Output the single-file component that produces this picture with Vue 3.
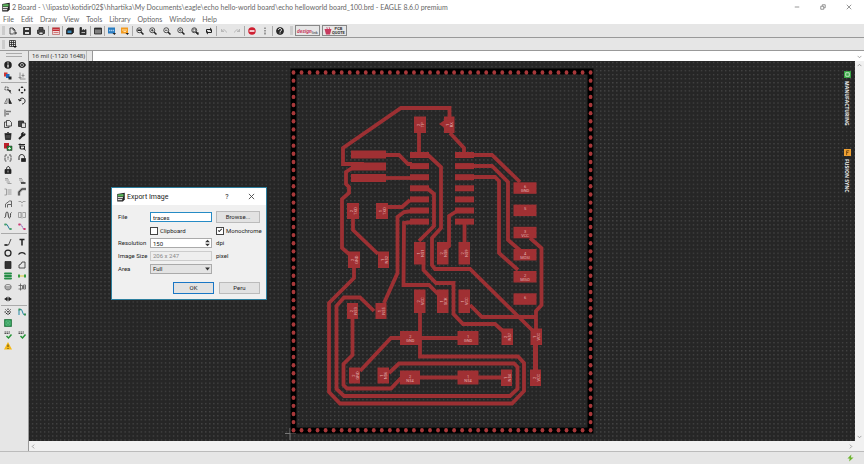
<script setup>
import { ref } from 'vue'

const menus = ['File', 'Edit', 'Draw', 'View', 'Tools', 'Library', 'Options', 'Window', 'Help']

const file = ref('traces')
const clipboard = ref(false)
const monochrome = ref(true)
const resolution = ref('150')
const size = ref('206 x 247')
const area = ref('Full')
const command = ref('')

// icon bodies, all on a 16x16 grid
const lens = '<circle cx="6.500" cy="6.500" r="5"/><path d="M10 10l5 5" stroke-width="3"/>'
const icons = {
  open: '<path d="M9 14H2V2h6l4 4v3M8 2v4h4"/><path d="M9 12h5M12 9l3 3-3 3" stroke-width="2"/>',
  save: '<path d="M1 1h14v14H1z" fill="#333"/><path d="M4 2h8v4H4zM4 10h8v4H4z" fill="#ddd" stroke="none"/>',
  print: '<path d="M4 6V1h8v5M4 13H1V6h14v7h-3" fill="#555"/><path d="M4 10h8v5H4z" fill="#ddd"/>',
  cam: '<path d="M1 1h14v14H1z" fill="#f0dada" stroke="#b66"/><path d="M1 2h14v6H1z" fill="#c22d35" stroke="none"/><path d="M3 5h2M7 5h2M11 5h2" stroke="#fff"/><path d="M3 11h10" stroke="#c55"/>',
  board: '<path d="M4 2h11v9l-3 3H1V6z" fill="#222"/><path d="M3 7h8v5H3z" fill="#3786b8" stroke="none"/>',
  factory: '<path d="M2 15V1h3v7l4-3v3l5-3v10z" fill="#333"/><path d="M5 11h7" stroke="#ddd"/>',
  library: '<path d="M1 2h14v12H1z" fill="#333"/><path d="M4 5v8M8 5v8M12 5v8" stroke="#ccc" stroke-width="2"/>',
  script: '<path d="M0 1h14v12H0z" fill="#287bc1" stroke="none"/><path d="M2 7h10" stroke="#a9cdec" stroke-dasharray="3 1" stroke-width="3"/><path d="M9 12h7l-3 4z" fill="#222" stroke="none"/>',
  ulp: '<path d="M0 1h14v12H0z" fill="#f29b20" stroke="none"/><path d="M2 6h10M5 9h5" stroke="#ffe0a8" stroke-width="2"/><path d="M9 12h7l-3 4z" fill="#222" stroke="none"/>',
  fit: lens + '<path d="M3 6.500h7" stroke-width="3"/>',
  zoomin: lens + '<path d="M4 6.500h5M6.500 4v5"/>',
  zoomout: lens + '<path d="M4 6.500h5"/>',
  redraw: lens + '<circle cx="6.500" cy="6.500" r="1.500"/>',
  select: lens + '<path d="M4 4h5v5H4z" stroke-width="1"/><path d="M9 11h7l-3 4z" fill="#222" stroke="none"/>',
  refresh: '<path d="M3 10V5h8M13 6v5H5" stroke-width="2"/><path d="M10 1l4 4-4 3zM6 8l-4 3 4 4z" fill="#222" stroke="none"/>',
  undo: '<path d="M3 9c3-5 8-4 10 2M3 4v5h5" stroke="#aaa"/>',
  redo: '<path d="M13 9c-3-5-8-4-10 2M13 4v5H8" stroke="#aaa"/>',
  stop: '<circle cx="8" cy="8" r="7.500" fill="#cf1f31" stroke="none"/><path d="M3 8h10" stroke="#fff" stroke-width="3"/>',
  go: '<path d="M8 1v3M8 6v3M8 11v4" stroke="#999" stroke-width="4"/>',
  help: '<circle cx="8" cy="8" r="7" fill="#2b2b2b"/><path d="M5 6c0-4 6-4 6 0 0 2-3 2-3 4M8 11v2" stroke="#fff" stroke-width="2"/>',
  grid: '<path d="M1 1h12v12H1zM5 1v12M9 1v12M1 5h12M1 9h12"/><path d="M8 12h8l-4 4z" fill="#111" stroke="none"/>',
  info: '<circle cx="8" cy="8" r="7.500" fill="#222" stroke="none"/><path d="M8 3v2M8 7v6" stroke="#fff" stroke-width="2.500"/>',
  eye: '<path d="M0 8c4-8 12-8 16 0-4 8-12 8-16 0z" fill="#222" stroke="none"/><circle cx="8" cy="8" r="3" fill="#222" stroke="#ddd"/>',
  layers: '<path d="M0 1h7v8H0z" fill="#c33" stroke="none"/><path d="M4 4h7v8H4z" fill="#2368bb" stroke="none"/><path d="M9 9h6v6H9z" fill="#222" stroke="none"/>',
  mark: '<path d="M4 1v13h11M1 11h6M10 3v8M7 7h6" stroke="#777"/>',
  group: '<path d="M2 2h6v6H2z" stroke-dasharray="2 1"/><path d="M7 7l7 3-3 1 3 4" fill="#222"/>',
  move: '<path d="M8 0l3 4H5zM8 16l3-4H5zM0 8l4-3v6zM16 8l-4-3v6z" fill="#222" stroke="none"/>',
  mirror: '<path d="M6 3v10H1z" stroke="#666"/><path d="M10 3v10h5z" fill="#222"/>',
  rotate: '<path d="M3 7c1-7 12-6 11 2-1 4-4 5-6 5M1 4l2 4 4-2" stroke-width="2"/>',
  align: '<path d="M2 1v14"/><path d="M4 5h10M4 10h6" stroke="#777" stroke-width="3"/>',
  copy: '<path d="M5 1h6l4 4v7H5zM5 4H1v11h9v-3"/>',
  paste: '<path d="M1 2h10v11H1z" fill="#444"/><path d="M7 6h8v9H7z" fill="#ddd"/>',
  trash: '<path d="M2 4h12l-1 11H3zM1 3h14M6 1h4" fill="#222"/><path d="M6 6v7M10 6v7" stroke="#bbb" stroke-width="1"/>',
  wrench: '<path d="M2 14l8-8" stroke-width="4"/><path d="M14 3c-3 3-5 1-3-2-5-1-6 7-1 7 4 0 5-3 4-5z" fill="#222"/>',
  add: '<path d="M0 0h10v11H0z" fill="#bd2029" stroke="none"/><path d="M6 6h10v9H6z" fill="#2a8e3e" stroke="#222" stroke-width="1"/><path d="M8 11h6M11 8v5" stroke="#fff"/>',
  replace: '<path d="M1 3h13M4 1v10M5 6h8v6H5zM11 10l4 5" stroke-width="2"/>',
  pinswap: '<path d="M6 2H2v12h4M10 2h4v12h-4M8 5v6" stroke-dasharray="4 1"/>',
  gateswap: '<path d="M2 12V7c0-8 11-8 11 0v2" stroke-width="2"/><path d="M7 9h8v6H7z" fill="#222"/>',
  lock: '<path d="M2 7h12v8H2z" fill="#222"/><path d="M5 7c0-8 7-8 7 0" stroke-width="2"/><path d="M8 9v4" stroke="#ddd"/>',
  name: '<path d="M2 3h6M2 6h8M5 10h7M7 13h8" stroke="#888"/>',
  value: '<path d="M2 3h6M2 6h8M4 10h8" stroke="#888"/><path d="M6 12h9" stroke-width="3"/>',
  smash: '<path d="M1 2h4v12H1M7 4h8M7 8h8M7 12h8" stroke="#888"/>',
  miter: '<path d="M2 15V8l6-6h8" stroke="#888" stroke-width="5"/><path d="M2 15V8l6-6h8"/>',
  split: '<path d="M3 15V8l8-6h4v12M7 15V9h8" stroke="#666" stroke-width="2"/>',
  optimize: '<path d="M1 3h5l2 3 2-3h5M8 9v4" stroke="#888"/>',
  meander: '<path d="M1 13C5 14 2 2 6 2s1 12 5 12 0-11 4-11" stroke="#444" stroke-width="2"/>',
  ripup: '<path d="M1 3h5v10H1zM10 3h5v10h-5M8 2v13" stroke="#888"/>',
  route: '<path d="M1 3h5l5 9h4" stroke="#227b9e" stroke-width="2"/><path d="M1 1h4v4H1zM11 10h4v4h-4z" fill="#4aa467" stroke="none"/>',
  ripline: '<path d="M1 3h5l5 9h4" stroke="#63a" stroke-dasharray="3 1"/><path d="M1 1h4v4H1zM11 10h4v4h-4z" fill="#d1356c" stroke="none"/>',
  line: '<path d="M1 14h8l5-12" stroke-width="1.500"/><path d="M1 14h6" stroke-width="3"/>',
  text: '<path d="M3 3h10M8 3v12" stroke-width="3"/>',
  circle: '<circle cx="8" cy="8" r="6" stroke-width="2.500"/>',
  arc: '<path d="M1 11c3-5 11-5 14 0" stroke-width="2.500"/>',
  rect: '<path d="M2 1h12v14H2z" fill="#333"/>',
  poly: '<path d="M2 14V8l4-2 2-4h6v12z"/>',
  via: '<path d="M2 3h12M2 8h12M2 13h12" stroke="#248d46" stroke-width="4" stroke-linecap="round"/>',
  signal: '<path d="M3 8h10" stroke="#dfc92e" stroke-width="2"/><path d="M0 5h4v6H0zM12 5h4v6h-4z" fill="#3a9c43" stroke="none"/>',
  hole: '<ellipse cx="8" cy="6" rx="6" ry="3" stroke="#666"/><path d="M2 6v4c1 5 11 5 12 0V6" stroke="#666" fill="#aaa"/>',
  attribute: '<path d="M1 5h8v7H1M5 1v14M9 8h6M11 4h4v8h-4z" stroke="#555"/>',
  dimension: '<path d="M1 8h14"/><path d="M1 8l6-5v10zM15 8L9 3v10z" fill="#222" stroke="none"/>',
  ratsnest: '<path d="M3 3l10 10M13 3L3 13M8 1v5M1 8h4M11 8h4M8 11v4" stroke-dasharray="3 2" stroke-width="2"/>',
  auto: '<path d="M2 14V3h5l4 10h4" stroke="#2588a5" stroke-width="2"/><path d="M1 1h4v4H1zM12 11h4v4h-4z" fill="#358f54" stroke="none"/>',
  pcb: '<path d="M1 1h14v14H1z" fill="#2a9a55" stroke="#24713e"/><path d="M4 4h8v8H4zM8 6v4M6 8h4" stroke="#8fd3a4" stroke-width="1"/>',
  erc: '<path d="M1 2h12M1 5h10" stroke="#555" stroke-width="2" stroke-dasharray="3 1"/><path d="M5 10l4 4 6-7" stroke="#259437" stroke-width="3"/>',
  warn: '<path d="M8 0l8 15H0z" fill="#f6b914" stroke="none"/><path d="M8 5v5M8 12v2" stroke="#222"/>'
}

const toolbar = [
  'open', 'save', 'print', '|cam', '|board', 'factory', '|library', '|script', 'ulp',
  '|fit', 'zoomin', 'zoomout', 'redraw', 'select', 'refresh', '|undo', 'redo', '|stop', 'go', '|help'
]

const palette = [
  { name: 'a', tools: ['info', 'eye', 'layers', 'mark'] },
  {
    name: 'b',
    tools: [
      'group', 'move', 'mirror', 'rotate', 'align', '', 'copy', 'paste', 'trash', 'wrench',
      'add', 'replace', 'pinswap', 'gateswap', 'lock', '', 'name', 'value', 'smash', 'miter',
      'split', 'optimize', 'meander', 'ripup', 'route', 'ripline'
    ]
  },
  {
    name: 'c',
    tools: ['line', 'text', 'circle', 'arc', 'rect', 'poly', 'via', 'signal', 'hole', 'attribute', 'dimension', '']
  },
  { name: 'd', tools: ['ratsnest', 'auto', 'pcb', '', 'erc', 'erc', 'warn', ''] }
]

// perforated board edge
const edge = []
for (let i = 0; i <= 37; i++) {
  const x = 293.5 + i * 8.03
  edge.push([x, 72.5], [x, 430.2])
}
for (let i = 1; i < 44; i++) {
  const y = 72.5 + i * 8.13
  edge.push([293.5, y], [590.6, y])
}

const traces = [
  '449.500,118 449.500,108 401,108 343,148 343,164 364,164',
  '385,155 399,155 408,164 412,164',
  '385,178 411,178',
  '352,168 346,172 346,184 349,187 349,193 342,199 342,248 349,254',
  '419,133 419,152',
  '450,133 464,148 464,152',
  '428,155 441,167 441,228 432,238 432,265 435,269 470,269 532,330',
  '416,189 428,189 434,194 434,226 419,241',
  '473,155 492,155 520,182',
  '473,166 492,166 508,182 508,240 522,252',
  '473,177 495,177 499,181 499,253 518,270',
  '530,238 541.500,248 541.500,305 536,311 536,330',
  '470,305 482,317 536,317',
  '387,207 402,207 410,200',
  '353,219 353,230 378,254',
  '354,268 354,278 329,303 329,392 340,403.500 512,403.500 524,391 524,363 518,356.500 420,356.500 420,310',
  '374,311 360,297.500 344,297.500 336.500,306 336.500,389 344,396 510,396 517.500,389 517.500,367 514,363.500 399,363.500 389,373',
  '352.500,319 352.500,355 343.500,364 343.500,385 347,388.500 391,388.500 401,378',
  '360,371 391,338 458,338',
  '420,377.500 502,377.500',
  '423.500,264 423.500,270 436,283 453.500,283 453.500,314 463,324 495,324 505,333',
  '412,211 404,212 397.500,217 397.500,273 384,303',
  '412,222 404,223 403.500,285 429,285 440,296',
  '457,211 449,216 449,246 445,249',
  '464.500,224 464.500,242'
]

const pads = [
  [351, 150.5, 35, 8], [351, 162.5, 35, 8], [351, 174, 35, 8]
]
for (let i = 0; i < 7; i++) {
  pads.push([410, 152 + i * 11.1, 19, 6], [455, 152 + i * 11.1, 19, 6])
}

// pads with a printed label; v marks the vertical ones
const labelled = [
  { r: [414, 116.5, 12, 16.5], t: ['2', 'TP'], v: true },
  { r: [444, 116.5, 10.5, 16.5], t: ['1', 'RX'], v: true },
  { r: [347, 203, 12, 16], t: ['2', 'TXD'], v: true },
  { r: [376, 203, 12, 16], t: ['1', 'TXD'], v: true },
  { r: [348, 251.5, 12, 16.5], t: ['2', 'GND'], v: true },
  { r: [378, 251.5, 11, 16.5], t: ['1', 'N$2'], v: true },
  { r: [347, 303, 11, 16], t: ['2', 'N$3'], v: true },
  { r: [375.5, 303, 11, 16], t: ['1', 'N$5'], v: true },
  { r: [349, 367.5, 11, 16], t: ['2', 'GND'], v: true },
  { r: [377.5, 367.5, 11.5, 16], t: ['1', 'N$6'], v: true },
  { r: [414, 242, 11.5, 22.5], t: ['1', 'N$1'], v: true },
  { r: [437, 242, 11.5, 22.5], t: ['2', 'N$8'], v: true },
  { r: [458.5, 242, 11.5, 22.5], t: ['2', 'N$9'], v: true },
  { r: [414, 289.5, 11.5, 23.5], t: ['2', 'VCC'], v: true },
  { r: [437, 289.5, 11.5, 23.5], t: ['1', 'SCK'], v: true },
  { r: [458.5, 289.5, 11.5, 23.5], t: ['1', 'VCC'], v: true },
  { r: [501.5, 328.5, 11.5, 16.5], t: ['2', 'N$7'], v: true },
  { r: [530.5, 328.5, 11.5, 16.5], t: ['1', 'VCC'], v: true },
  { r: [501, 369.5, 11, 16.5], t: ['1', 'N$4'], v: true },
  { r: [530, 369.5, 11, 16.5], t: ['2', 'VCC'], v: true },
  { r: [400, 331, 20.5, 14], t: ['2', 'GND'] },
  { r: [457.5, 331, 21, 14], t: ['1', 'GND'] },
  { r: [400, 370.5, 20, 14], t: ['2', 'N$4'] },
  { r: [457.5, 370.5, 21, 14], t: ['1', 'N$4'] },
  { r: [513.5, 182.3, 23, 11.5], t: ['6', 'GND'] },
  { r: [513.5, 204.6, 23, 11.5], t: ['5'] },
  { r: [513.5, 226.8, 23, 11.5], t: ['3', 'VCC'] },
  { r: [513.5, 249, 23, 11.5], t: ['4', 'MOSI'] },
  { r: [513.5, 271, 23, 11.5], t: ['2', 'MISO'] },
  { r: [513.5, 293.3, 23, 11.5], t: ['6'] }
]

function place(p) {
  const cx = p.r[0] + p.r[2] / 2
  const cy = p.r[1] + p.r[3] / 2
  return `translate(${cx} ${cy})` + (p.v ? ' rotate(-90)' : '')
}
</script>

<template>
  <div class="app">
    <header class="titlebar">
      <svg class="logo" viewBox="0 0 16 16"><path d="M2 3l12-2v11l-3 3H2z" fill="#222" /><path d="M3 4l9-1v4H3z" fill="#5cb85c" /><path d="M3 9h8M3 12h7" stroke="#ddd" stroke-width="2" /></svg>
      <span class="caption">2 Board - \\lipasto\kotidir02$\hhartika\My Documents\eagle\echo hello-world board\echo helloworld board_100.brd - EAGLE 8.6.0 premium</span>
      <button class="winbtn" aria-label="Minimize"><svg viewBox="0 0 8 8"><path d="M1 4h6" /></svg></button>
      <button class="winbtn" aria-label="Restore"><svg viewBox="0 0 8 8"><path d="M1 3h4v4H1zM3 3V1h4v4H5" /></svg></button>
      <button class="winbtn" aria-label="Close"><svg viewBox="0 0 8 8"><path d="M1 1l6 6M7 1L1 7" /></svg></button>
    </header>

    <nav class="menu">
      <button v-for="m in menus" :key="m">{{ m }}</button>
    </nav>

    <div class="toolbar">
      <i class="handle"></i>
      <button v-for="t in toolbar" :key="t" class="tool" :class="{ first: t[0] == '|' }" :aria-label="t.replace('|', '')">
        <svg viewBox="0 0 16 16" v-html="icons[t.replace('|', '')]"></svg>
      </button>
      <i class="handle late"></i>
      <button class="service"><span class="script">design</span><span class="sub">link</span></button>
      <button class="service">
        <svg viewBox="0 0 16 16"><path d="M1 4h14l-3 11H4zM4 1h3v4M9 1h3v4" fill="#c73b5f" /></svg>
        <span class="two">PCB<br>QUOTE</span>
      </button>
    </div>

    <div class="toolbar second">
      <i class="handle"></i>
      <button class="tool" aria-label="Grid"><svg viewBox="0 0 16 16" v-html="icons.grid"></svg></button>
    </div>

    <div class="main">
      <aside class="palette">
        <div class="grip"></div>
        <div v-for="g in palette" :key="g.name" class="tools" :class="g.name">
          <template v-for="(t, i) in g.tools" :key="i">
            <button v-if="t" class="tool" :aria-label="t"><svg viewBox="0 0 16 16" v-html="icons[t]"></svg></button>
            <span v-else></span>
          </template>
        </div>
      </aside>

      <section class="work">
        <div class="cmdbar">
          <span class="coords">16 mil (-1120 1648)</span>
          <div class="cmd">
            <input v-model="command" type="text" aria-label="Command">
            <svg viewBox="0 0 8 8"><path d="M1 3l3 3 3-3" /></svg>
          </div>
        </div>

        <div class="view">
          <div class="canvas">
            <svg class="dots" width="100%" height="100%">
              <defs>
                <pattern id="dots" x="2" y="0" width="4.030" height="4.060" patternUnits="userSpaceOnUse">
                  <rect x="1" y="1" width="1" height="1" fill="#5a5a5a" />
                </pattern>
              </defs>
              <rect width="100%" height="100%" fill="url(#dots)" />
            </svg>
            <svg class="board" viewBox="29 61 826 380" width="826" height="380">
              <path d="M290 428v12M285 433.500h11" stroke="#777" />
              <rect x="293.500" y="71.500" width="297" height="359" fill="none" stroke="#000" stroke-width="6" />
              <ellipse v-for="(e, i) in edge" :key="i" :cx="e[0]" :cy="e[1]" rx="1.900" ry="2.200" fill="#a8383a" />
              <g fill="none" stroke="#9c3033" stroke-width="3.800">
                <polyline v-for="t in traces" :key="t" :points="t" />
                <path d="M535.500 345v25" stroke-width="5" />
              </g>
              <path d="M439 124l7-5v10z" fill="#9e3033" />
              <rect v-for="(p, i) in pads" :key="i" :x="p[0]" :y="p[1]" :width="p[2]" :height="p[3]" fill="#a03033" />
              <g v-for="(p, i) in labelled" :key="i">
                <rect :x="p.r[0]" :y="p.r[1]" :width="p.r[2]" :height="p.r[3]" fill="#a03033" />
                <g :transform="place(p)" class="lbl">
                  <text y="0">{{ p.t[0] }}</text>
                  <text y="4">{{ p.t[1] }}</text>
                </g>
              </g>
            </svg>
            <div class="sidetabs">
              <button><svg viewBox="0 0 8 8"><rect width="8" height="8" fill="#38a544" /><path d="M2 2h4v4H2z" fill="none" stroke="#d5f0d5" /></svg><span>MANUFACTURING</span></button>
              <button><svg viewBox="0 0 8 8"><rect width="8" height="8" fill="#efa031" /><path d="M3 7V2h3M3 4h2" fill="none" stroke="#6e4512" /></svg><span>FUSION SYNC</span></button>
            </div>
          </div>
          <div class="vscroll">
            <svg viewBox="0 0 8 8"><path d="M1 5l3-3 3 3" /></svg>
            <svg viewBox="0 0 8 8"><path d="M1 3l3 3 3-3" /></svg>
          </div>
          <div class="hscroll">
            <svg viewBox="0 0 8 8"><path d="M5 1L2 4l3 3" /></svg>
            <svg viewBox="0 0 8 8"><path d="M3 1l3 3-3 3" /></svg>
          </div>
        </div>
      </section>
    </div>

    <footer class="status">
      <svg viewBox="0 0 16 16"><path d="M10 0L1 9h5l-1 7 10-9H9z" fill="#6cb52d" /></svg>
    </footer>

    <form class="dialog" role="dialog" aria-label="Export Image" @submit.prevent>
      <div class="dtitle">
        <svg class="logo" viewBox="0 0 16 16"><path d="M2 3l12-2v11l-3 3H2z" fill="#222" /><path d="M3 4l9-1v4H3z" fill="#5cb85c" /><path d="M3 9h8M3 12h7" stroke="#ddd" stroke-width="2" /></svg>
        <span class="caption">Export Image</span>
        <button type="button" class="q">?</button>
        <button type="button" aria-label="Close"><svg viewBox="0 0 8 8"><path d="M1 1l6 6M7 1L1 7" /></svg></button>
      </div>
      <div class="fields">
        <label for="file">File</label>
        <input id="file" v-model="file" type="text" class="box focus">
        <button type="button" class="push">Browse...</button>

        <span></span>
        <label class="check"><input v-model="clipboard" type="checkbox">Clipboard</label>
        <label class="check"><input v-model="monochrome" type="checkbox">Monochrome</label>

        <label for="res">Resolution</label>
        <div class="spin">
          <input id="res" v-model="resolution" type="text" class="box">
          <svg viewBox="0 0 6 10"><path d="M3 1l3 3H0zM3 9l3-3H0z" /></svg>
        </div>
        <span>dpi</span>

        <label for="size">Image Size</label>
        <input id="size" v-model="size" type="text" class="box" disabled>
        <span>pixel</span>

        <label for="area">Area</label>
        <div class="spin">
          <select id="area" v-model="area" class="box">
            <option>Full</option>
            <option>Window</option>
          </select>
          <svg viewBox="0 0 6 10"><path d="M0 3h6L3 7z" /></svg>
        </div>
      </div>
      <div class="actions">
        <button type="submit" class="push ok">OK</button>
        <button type="button" class="push">Peru</button>
      </div>
    </form>
  </div>
</template>

<style>
body {
  margin: 0;
}
</style>

<style scoped>
.app {
  position: relative;
  display: flex;
  flex-direction: column;
  height: 100vh;
  overflow: hidden;
  background: #e6e6e6;
  color: #222;
  font: 6px/8px Roboto, "Noto Sans", sans-serif;
}
button, input, select {
  box-sizing: border-box;
  margin: 0;
  padding: 0;
  border: 0;
  border-radius: 0;
  background: none;
  color: inherit;
  font: inherit;
}
svg {
  flex: none;
}

.titlebar, .menu {
  font-family: Lato, "Noto Sans", sans-serif;
  font-size: 7px;
}
.titlebar {
  display: flex;
  align-items: center;
  height: 13px;
  padding: 0 2px 0 1px;
  background: #fff;
}
.logo {
  width: 10px;
  height: 10px;
  fill: none;
}
.titlebar .caption {
  flex: 1;
  margin-left: 1px;
  color: #666;
  white-space: nowrap;
}
.winbtn {
  display: flex;
  justify-content: center;
  width: 26px;
}
.winbtn svg {
  width: 6px;
  height: 6px;
  fill: none;
  stroke: #777;
}
.menu {
  display: flex;
  gap: 7px;
  height: 11px;
  padding-left: 3px;
  background: #fff;
}
.menu button {
  height: 12px;
  color: #666;
}

.toolbar {
  display: flex;
  align-items: center;
  height: 13px;
  padding-left: 2px;
  border-bottom: 1px solid #999;
}
.toolbar.second {
  height: 12px;
}
.handle {
  width: 3px;
  height: 9px;
  margin-right: 1px;
  background: #ccc;
}
.late {
  margin: 0 2px 0 4px;
}
.tool {
  display: flex;
  align-items: center;
  justify-content: center;
  width: 14px;
  height: 10px;
}
.first {
  border-left: 1px solid #aaa;
}
.tool svg {
  width: 8px;
  height: 8px;
  overflow: visible;
  fill: none;
  stroke: #222;
  stroke-width: 1.500;
}
.service {
  display: flex;
  align-items: center;
  justify-content: center;
  width: 25px;
  height: 11px;
  margin-right: 2px;
  border: 1px solid #888;
  color: #333;
  font-size: 4px;
  line-height: 4px;
}
.service svg {
  width: 8px;
  height: 8px;
}
.script {
  color: #c73b5f;
  font-size: 5px;
  font-style: italic;
  font-weight: bold;
}
.sub {
  align-self: flex-end;
}
.two {
  font-weight: bold;
}

.main {
  display: flex;
  flex: 1;
  min-height: 0;
}
.palette {
  width: 28px;
  border-right: 1px solid #999;
}
.grip {
  height: 2px;
  margin: 2px 6px 3px;
  border: solid #aaa;
  border-width: 1px 0;
}
.tools {
  display: grid;
  grid-template-columns: 1fr 1fr;
  grid-auto-rows: 1fr;
  margin: 0 1px;
  border-bottom: 1px solid #aaa;
}
.a {
  height: 22px;
}
.b {
  height: 148px;
  padding-top: 2px;
}
.c {
  height: 68px;
  padding-top: 3px;
}
.d {
  height: 45px;
  padding-top: 1px;
  border: 0;
}

.work {
  display: flex;
  flex: 1;
  flex-direction: column;
  min-width: 0;
}
.cmdbar {
  display: flex;
  height: 10px;
}
.coords {
  width: 54px;
  margin-right: 5px;
  padding-left: 3px;
  border-right: 1px solid #bbb;
  font-family: "Open Sans", sans-serif;
  line-height: 10px;
  white-space: nowrap;
}
.cmd {
  display: flex;
  flex: 1;
  align-items: center;
  padding-right: 2px;
  border-left: 1px solid #999;
  background: #fff;
}
.cmd input {
  flex: 1;
  height: 8px;
}
.cmd svg, .vscroll svg, .hscroll svg {
  width: 5px;
  height: 5px;
  fill: none;
  stroke: #777;
}
.view {
  display: grid;
  flex: 1;
  grid-template-columns: 1fr 9px;
  grid-template-rows: 1fr 10px;
  min-height: 0;
  background: #f1f1f1;
}
.canvas {
  position: relative;
  overflow: hidden;
  background: #262626;
}
.dots, .board {
  position: absolute;
  top: 0;
  left: 0;
}
.lbl {
  fill: #e0b0b0;
  font-size: 4px;
  text-anchor: middle;
}
.sidetabs {
  position: absolute;
  top: 10px;
  right: 4px;
  display: flex;
  flex-direction: column;
}
.sidetabs button {
  display: flex;
  flex-direction: column;
  align-items: center;
  gap: 3px;
  width: 8px;
  height: 78px;
  color: #eee;
  font-family: "Open Sans", sans-serif;
  font-size: 5px;
  font-weight: bold;
}
.sidetabs svg {
  width: 7px;
  height: 7px;
}
.sidetabs span {
  writing-mode: vertical-rl;
  white-space: nowrap;
}
.vscroll {
  display: flex;
  flex-direction: column;
  align-items: center;
  justify-content: space-between;
  padding: 2px 0;
}
.hscroll {
  display: flex;
  align-items: center;
  justify-content: space-between;
  padding: 0 2px;
}
.status {
  display: flex;
  align-items: center;
  justify-content: flex-end;
  height: 12px;
  padding-right: 10px;
  border-top: 1px solid #bbb;
}
.status svg {
  width: 7px;
  height: 8px;
}

.dialog {
  position: absolute;
  top: 187px;
  left: 111px;
  width: 154px;
  border: 1px solid #2d7f9e;
  background: #f0f0f0;
}
.dtitle {
  display: flex;
  align-items: center;
  height: 17px;
  padding: 0 10px 0 4px;
  background: #fff;
}
.dtitle .caption {
  flex: 1;
  margin-left: 1px;
  font-size: 7px;
}
.dtitle button {
  width: 8px;
}
.dtitle .q {
  margin-right: 17px;
  font-size: 7px;
}
.dtitle button svg {
  display: block;
  width: 7px;
  height: 7px;
  fill: none;
  stroke: #444;
}
.fields {
  display: grid;
  grid-template-columns: 28px 62px 44px;
  grid-template-rows: 14px 13px 12px 13px 13px;
  column-gap: 4px;
  align-items: center;
  padding: 5px 6px 0;
  white-space: nowrap;
}
.box {
  width: 62px;
  height: 10px;
  padding: 0 2px;
  border: 1px solid #aaa;
  background: #fff;
}
.box:disabled {
  background: #eee;
  border-color: #ccc;
  color: #888;
}
.focus {
  border-color: #268bc5;
}
.spin {
  position: relative;
}
.spin .box {
  display: block;
}
.spin svg {
  position: absolute;
  top: 1px;
  right: 2px;
  width: 5px;
  height: 8px;
  fill: #333;
  pointer-events: none;
}
select.box {
  appearance: none;
  background: #e3e3e3;
}
.check {
  display: flex;
  align-items: center;
  gap: 2px;
}
.check input {
  appearance: none;
  width: 8px;
  height: 8px;
  border: 1px solid #444;
  background: #fff;
}
.check input:checked::after {
  content: "";
  display: block;
  width: 1px;
  height: 3px;
  margin: 0 2px;
  border: solid #333;
  border-width: 0 1px 1px 0;
  transform: rotate(45deg);
}
.push {
  height: 12px;
  border: 1px solid #bbb;
  background: #e2e2e2;
}
.actions {
  display: flex;
  justify-content: flex-end;
  gap: 5px;
  padding: 7px 6px 5px;
}
.actions .push {
  width: 41px;
}
.actions .ok {
  border: 1px solid #1976c5;
}
</style>
